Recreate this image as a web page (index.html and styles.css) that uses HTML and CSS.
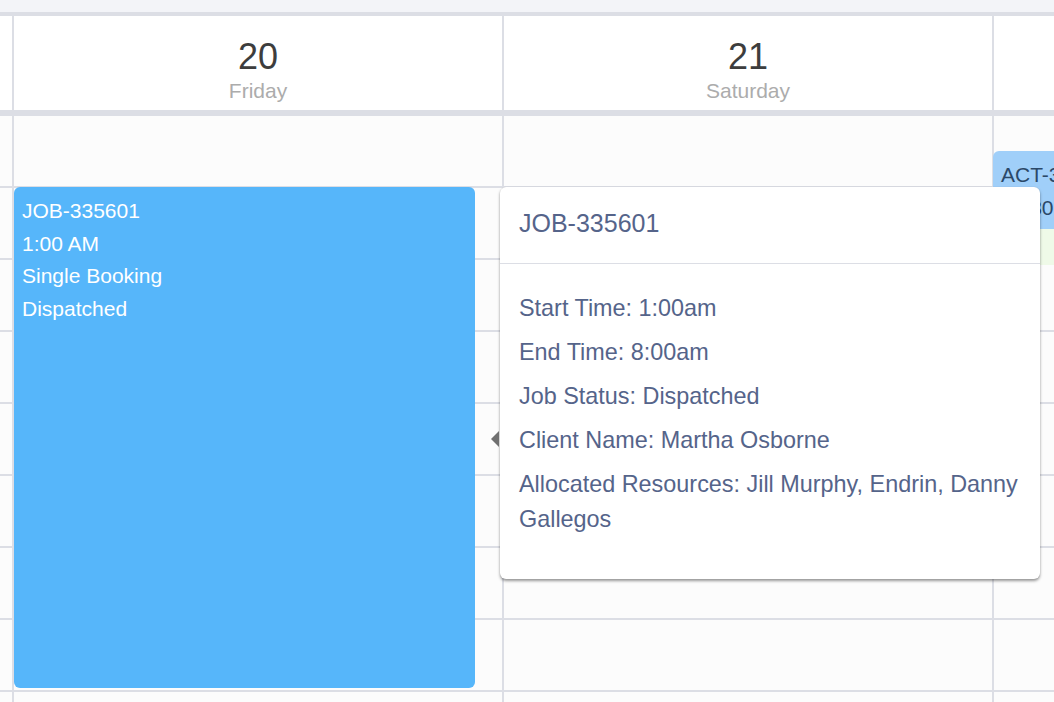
FILE: index.html
```html
<!DOCTYPE html>
<html lang="en">
<head>
    <meta charset="UTF-8">
    <meta name="viewport" content="width=device-width, initial-scale=1.0">
    <title>Schedule - Week</title>
    <link rel="stylesheet" href="styles.css">
</head>
<body>
    <div class="topbar"></div>
    <div class="calendar">
        <!-- Day headers -->
        <div class="head">
            <div class="head-gutter"></div>
            <div class="day"><span class="num">20</span><span class="name">Friday</span></div>
            <div class="day"><span class="num">21</span><span class="name">Saturday</span></div>
            <div class="day"></div>
        </div>

        <!-- Time grid -->
        <div class="grid">
            <div class="col gutter">
                <div class="cell"></div><div class="cell"></div><div class="cell"></div>
                <div class="cell"></div><div class="cell"></div><div class="cell"></div>
                <div class="cell"></div><div class="cell"></div><div class="cell"></div>
            </div>
            <div class="col">
                <div class="cell"></div><div class="cell"></div><div class="cell"></div>
                <div class="cell"></div><div class="cell"></div><div class="cell"></div>
                <div class="cell"></div><div class="cell"></div><div class="cell"></div>
                <div class="event job">
                    <div>JOB-335601</div>
                    <div>1:00 AM</div>
                    <div>Single Booking</div>
                    <div>Dispatched</div>
                </div>
            </div>
            <div class="col">
                <div class="cell"></div><div class="cell"></div><div class="cell"></div>
                <div class="cell"></div><div class="cell"></div><div class="cell"></div>
                <div class="cell"></div><div class="cell"></div><div class="cell"></div>
            </div>
            <div class="col">
                <div class="cell"></div><div class="cell"></div><div class="cell"></div>
                <div class="cell"></div><div class="cell"></div><div class="cell"></div>
                <div class="cell"></div><div class="cell"></div><div class="cell"></div>
                <div class="event act">
                    <div class="act-top">
                        <div>ACT-300412</div>
                        <div>10:30 AM</div>
                    </div>
                    <div class="act-bottom"></div>
                </div>
            </div>

            <!-- Event details popover -->
            <div class="popover">
                <div class="arrow"></div>
                <div class="popover-title">JOB-335601</div>
                <div class="popover-body">
                    <p>Start Time: 1:00am</p>
                    <p>End Time: 8:00am</p>
                    <p>Job Status: Dispatched</p>
                    <p>Client Name: Martha Osborne</p>
                    <p>Allocated Resources: Jill Murphy, Endrin, Danny Gallegos</p>
                </div>
            </div>
        </div>
    </div>
</body>
</html>
```

FILE: styles.css
```css
body{
    margin: 0;
    padding: 0;
    font-family: "Liberation Sans", Arial, sans-serif;
    background: #fcfcfc;
    height: 100vh;
    overflow: hidden;
}
.topbar{
    height: 12px;
    background: #f3f4f8;
}
.calendar{
    width: 1482px;
}
.head{
    display: grid;
    grid-template-columns: 12px repeat(3, 490px);
    height: 94px;
    background: #fff;
    border-top: 4px solid #dcdee5;
    border-bottom: 6px solid #dcdee5;
}
.day{
    border-left: 2px solid #dcdee5;
    display: flex;
    flex-direction: column;
    align-items: center;
    padding-top: 21px;
}
.num{
    font-size: 36px;
    line-height: 40px;
    color: #3d3d3d;
}
.name{
    font-size: 21px;
    line-height: 28px;
    color: #acacac;
}
.grid{
    position: relative;
    display: grid;
    grid-template-columns: 12px repeat(3, 490px);
}
.col{
    position: relative;
    display: flex;
    flex-direction: column;
    border-left: 2px solid #dcdee5;
}
.col.gutter{
    border-left: none;
}
.cell{
    height: 70px;
    flex: none;
    border-bottom: 2px solid #dcdee5;
    background: #fcfcfc;
}
.event{
    position: absolute;
    border-radius: 6px;
    font-size: 21px;
    line-height: 32.5px;
    box-sizing: border-box;
}
.job{
    top: 71px;
    left: 0;
    width: 461px;
    height: 501px;
    padding: 8px;
    background: #56b6fa;
    color: #fff;
}
.act{
    top: 35px;
    left: -1px;
    width: 220px;
    overflow: hidden;
}
.act-top{
    height: 70px;
    padding: 8px 8px 0;
    background: #a0cff9;
    color: #2b4868;
    white-space: nowrap;
}
.act-bottom{
    height: 36px;
    background: #effae8;
}
.popover{
    position: absolute;
    top: 71px;
    left: 500px;
    width: 540px;
    background: #fff;
    border-radius: 6px;
    box-shadow: 0 0 1px rgba(0, 0, 0, 0.15), 0 2px 3px rgba(0, 0, 0, 0.4);
    color: #55648a;
    z-index: 2;
}
.arrow{
    position: absolute;
    left: -9px;
    top: 244px;
    width: 0;
    height: 0;
    border-top: 8px solid transparent;
    border-bottom: 8px solid transparent;
    border-right: 8px solid #707070;
}
.popover-title{
    padding: 22px 19px 26px;
    font-size: 25px;
    line-height: 28px;
    border-bottom: 1px solid #dcdee5;
}
.popover-body{
    padding: 27px 19px 33px;
    font-size: 23.4px;
    line-height: 35px;
}
.popover-body p{
    margin: 0 0 9px;
}
```
